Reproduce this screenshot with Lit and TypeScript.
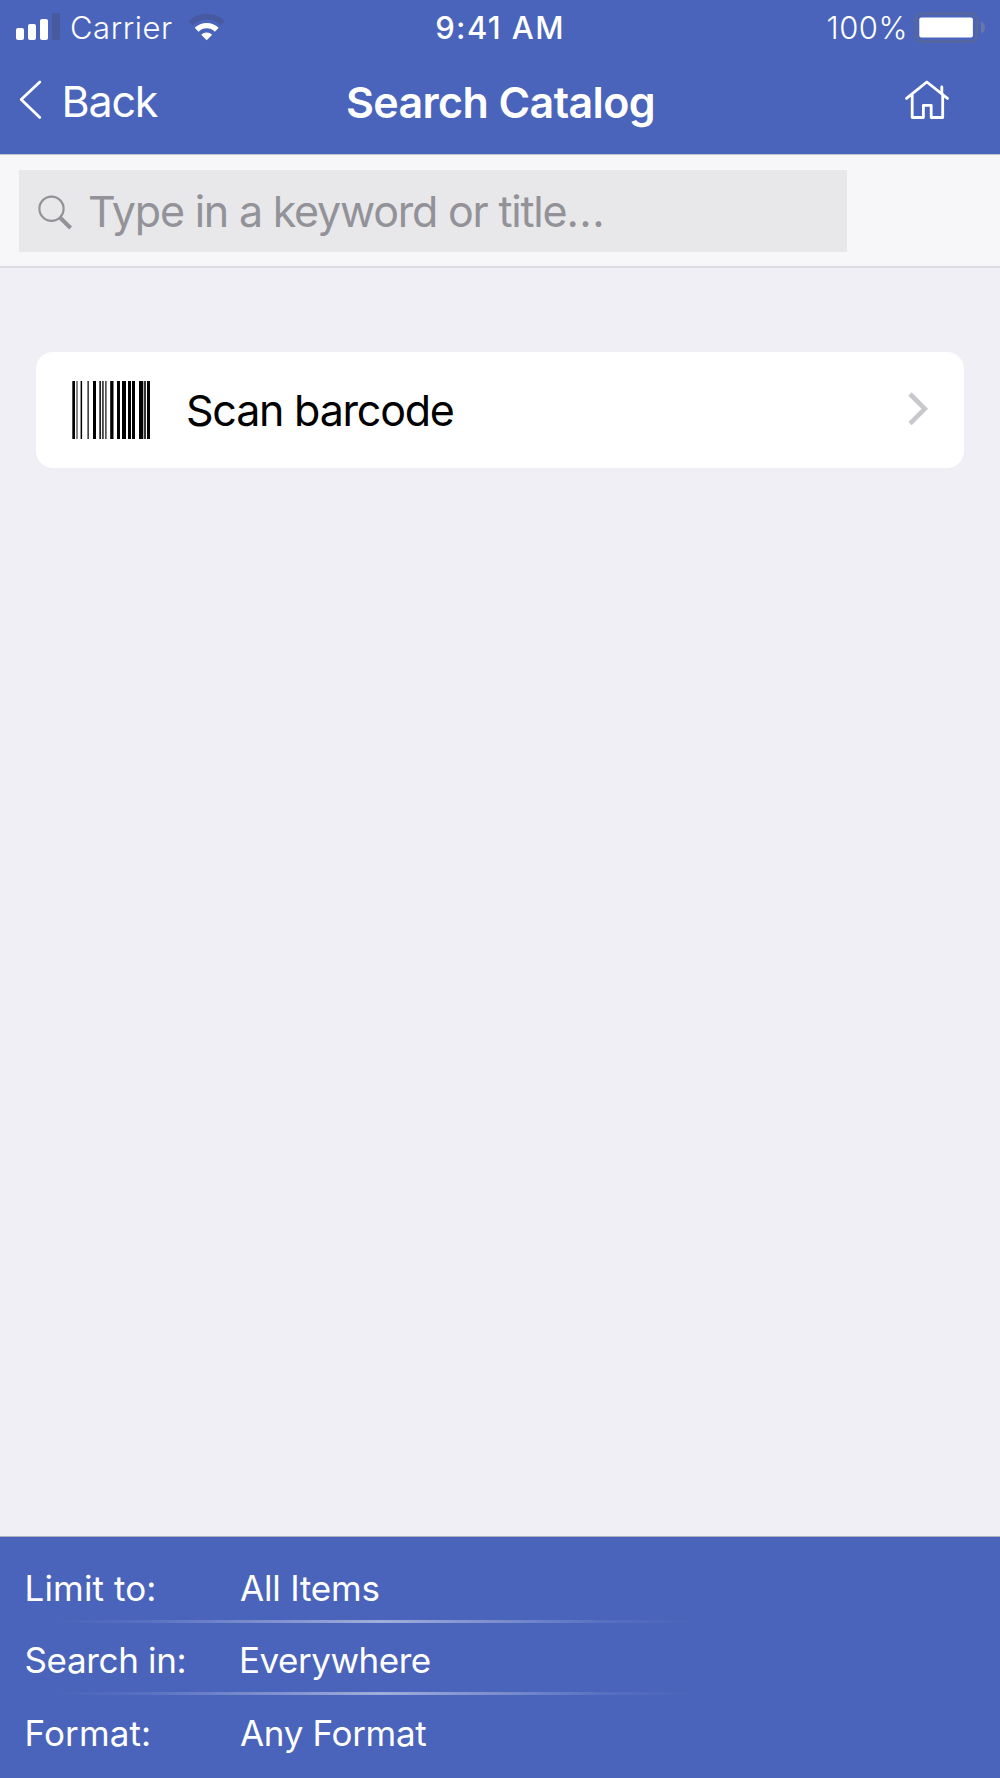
import { LitElement, html, css, svg } from "lit";
import { customElement, property } from "lit/decorators.js";

/* Bars of the barcode icon: x offset, width, shade */
const BARS: [number, number, string][] = [
  [0.3, 2.7, "#000"], [4, 2, "#8a8a8a"], [8.6, 1.5, "#000"], [15.4, 1.5, "#333"],
  [21, 3, "#000"], [27.3, 1.7, "#222"], [30, 1.8, "#444"], [33, 1.7, "#555"],
  [38.2, 3.3, "#000"], [45, 3, "#000"], [50, 4, "#000"], [56, 3, "#000"],
  [60, 3, "#000"], [67, 4.3, "#000"], [72, 2, "#333"], [75, 3, "#000"],
];

@customElement("status-bar")
class StatusBar extends LitElement {
  static styles = css`
    :host { display: grid; grid-template-columns: 1fr auto 1fr; align-items: center; height: 53px; padding: 0 15px 0 16px; font-size: 31px; line-height: 37px; color: #fff; }
    svg { display: block; }
    .left, .right { display: flex; align-items: center; }
    .right { justify-content: flex-end; }
    .text { padding-top: 2px; font-weight: 300; white-space: nowrap; }
    .carrier { margin: 0 14px 0 10px; letter-spacing: 0.55px; }
    .time { font-weight: 450; letter-spacing: 1.4px; padding-right: 1px; }
    .percent { letter-spacing: 0.5px; margin-right: 6px; }
  `;
  render() {
    return html`
      <div class="left">
        <svg width="44" height="53" viewBox="16 0 44 53" fill="#fff">
          <rect x="16" y="28" width="8" height="12" rx="2" />
          <rect x="28" y="24" width="8" height="16" rx="2" />
          <rect x="40" y="19" width="8" height="21" rx="2" />
          <rect x="52" y="13" width="8" height="27" rx="2" fill="#475a9f" />
        </svg>
        <span class="text carrier">Carrier</span>
        <svg width="40" height="53" viewBox="187 0 40 53" fill="none">
          <path d="M190.5 23.2A23.3 23.3 0 0 1 222.9 23.2" stroke="#475a9f" stroke-width="5.8" />
          <path d="M196.6 29.7A14.5 14.5 0 0 1 216.8 29.7" stroke="#fff" stroke-width="5.4" />
          <path d="M206.7 40.2L201.2 34.7A7.8 7.8 0 0 1 212.2 34.7Z" fill="#fff" />
        </svg>
      </div>
      <span class="text time">9:41 AM</span>
      <div class="right">
        <span class="text percent">100%</span>
        <svg width="71" height="53" viewBox="914 0 71 53">
          <rect x="915.6" y="13.6" width="61.4" height="28" rx="6.5" fill="none" stroke="#56669f" stroke-width="2.8" />
          <rect x="919.3" y="17.6" width="53.6" height="19.8" rx="2" fill="#fff" />
          <path d="M981 21.5C983.4 22.5 985 24.7 985 27.5S983.4 32.5 981 33.5Z" fill="#6b77a8" />
        </svg>
      </div>
    `;
  }
}

@customElement("nav-bar")
class NavBar extends LitElement {
  @property() heading = "";
  static styles = css`
    :host { display: grid; grid-template-columns: 1fr auto 1fr; align-items: center; height: 100px; padding: 0 50px 0 19px; font-size: 43px; line-height: 52px; color: #fff; }
    svg { display: block; fill: none; stroke: #fff; stroke-width: 2.8; stroke-linejoin: round; stroke-linecap: round; }
    .back { display: flex; align-items: center; gap: 18.5px; }
    .back span { letter-spacing: -1.2px; padding-bottom: 5px; }
    .heading { font-size: 43px; font-weight: 600; letter-spacing: -0.6px; margin: 0; line-height: 52px; padding: 0 0 2px 32px; }
    .home { justify-self: end; }
  `;
  render() {
    return html`
      <div class="back">
        <svg width="24" height="100" viewBox="19 53 24 100"><path d="M39.8 82L21.2 99.6L39.8 117.4" /></svg>
        <span>Back</span>
      </div>
      <h1 class="heading">${this.heading}</h1>
      <svg class="home" width="46" height="100" viewBox="904 53 46 100">
        <path d="M906.5 98.4L926.8 82L947.5 98.4M912.2 95V117.5H923.4V105.3H931.2V117.5H942.7V95.5L941.8 93V87" />
      </svg>
    `;
  }
}

@customElement("search-field")
class SearchField extends LitElement {
  @property() placeholder = "";
  static styles = css`
    :host { display: block; padding: 15px 153px 14px 19px; background: #f7f7f9; border-top: 1px solid #c3c5d0; border-bottom: 2px solid #dcdce0; }
    .field { display: flex; align-items: center; gap: 15px; box-sizing: border-box; height: 82px; padding-left: 18px; background: #e8e8ea; color: #929298; font-size: 43px; line-height: 52px; letter-spacing: -1.22px; }
    .text { white-space: nowrap; }
    .dots { letter-spacing: 0.5px; }
    svg { display: block; fill: none; stroke: #929298; }
  `;
  render() {
    return html`
      <div class="field">
        <svg width="36" height="40" viewBox="37 191 36 40">
          <circle cx="51.5" cy="208.7" r="12.1" stroke-width="2.2" />
          <path d="M60.2 217.8L70.6 228" stroke-width="4" />
        </svg>
        <span class="text">${this.placeholder}<span class="dots">...</span></span>
      </div>
    `;
  }
}

@customElement("action-row")
class ActionRow extends LitElement {
  @property() label = "";
  static styles = css`
    :host { display: flex; align-items: center; height: 116px; box-sizing: border-box; padding: 0 35px 0 36px; border-radius: 17px; background: #fff; color: #000; font-size: 43px; line-height: 52px; }
    svg { display: block; flex: none; }
    span { flex: 1; margin-left: 36px; letter-spacing: -1.22px; }
  `;
  render() {
    return html`
      <svg width="78" height="58" viewBox="0 0 78 58">
        ${BARS.map(([x, w, c]) => svg`<rect x=${x} y="0" width=${w} height="58" fill=${c} />`)}
      </svg>
      <span>${this.label}</span>
      <svg width="22" height="40" viewBox="907 390 22 40">
        <path d="M910 394L924.8 408.8L910 423.6" fill="none" stroke="#c7c7cc" stroke-width="4.6" />
      </svg>
    `;
  }
}

@customElement("filter-panel")
class FilterPanel extends LitElement {
  static styles = css`
    :host { display: grid; grid-template-rows: 73px 72px 73px; box-sizing: border-box; height: 242px; padding: 13px 0 0 24px; border-top: 1px solid #aeb0bd; background: #4a64bb; color: #fff; font-size: 35px; line-height: 42px; }
    .row { display: grid; grid-template-columns: 215px 1fr; align-items: center; padding: 2px 0 0; background: linear-gradient(90deg, transparent 26px, rgba(255,255,255,.08) 120px, rgba(255,255,255,.48) 358px, rgba(255,255,255,.08) 580px, transparent 670px) bottom / 100% 3px no-repeat; }
    .row:last-child { background: none; }
    .s { letter-spacing: -0.35px; margin-left: 0.5px; }
    .l { letter-spacing: 0.12px; margin-left: 0.6px; }
    .v { letter-spacing: -0.48px; }
    .a { letter-spacing: -0.19px; margin-left: 1px; }
    .f { letter-spacing: -0.32px; margin-left: 1px; }
  `;
  render() {
    return html`
      <div class="row"><span class="l">Limit to:</span><span class="a">All Items</span></div>
      <div class="row"><span class="s">Search in:</span><span class="v">Everywhere</span></div>
      <div class="row"><span class="l">Format:</span><span class="f">Any Format</span></div>
    `;
  }
}

@customElement("app-root")
class AppRoot extends LitElement {
  static styles = css`
    :host { display: flex; flex-direction: column; height: 1778px; width: 1000px; overflow: hidden; background: #f0eff5; font-family: Inter, "Liberation Sans", sans-serif; }
    header { background: #4a64bb; height: 154px; }
    main { flex: 1; padding: 84px 36px 0; }
  `;
  render() {
    return html`
      <header>
        <status-bar></status-bar>
        <nav-bar heading="Search Catalog"></nav-bar>
      </header>
      <search-field placeholder="Type in a keyword or title"></search-field>
      <main><action-row label="Scan barcode"></action-row></main>
      <filter-panel></filter-panel>
    `;
  }
}
